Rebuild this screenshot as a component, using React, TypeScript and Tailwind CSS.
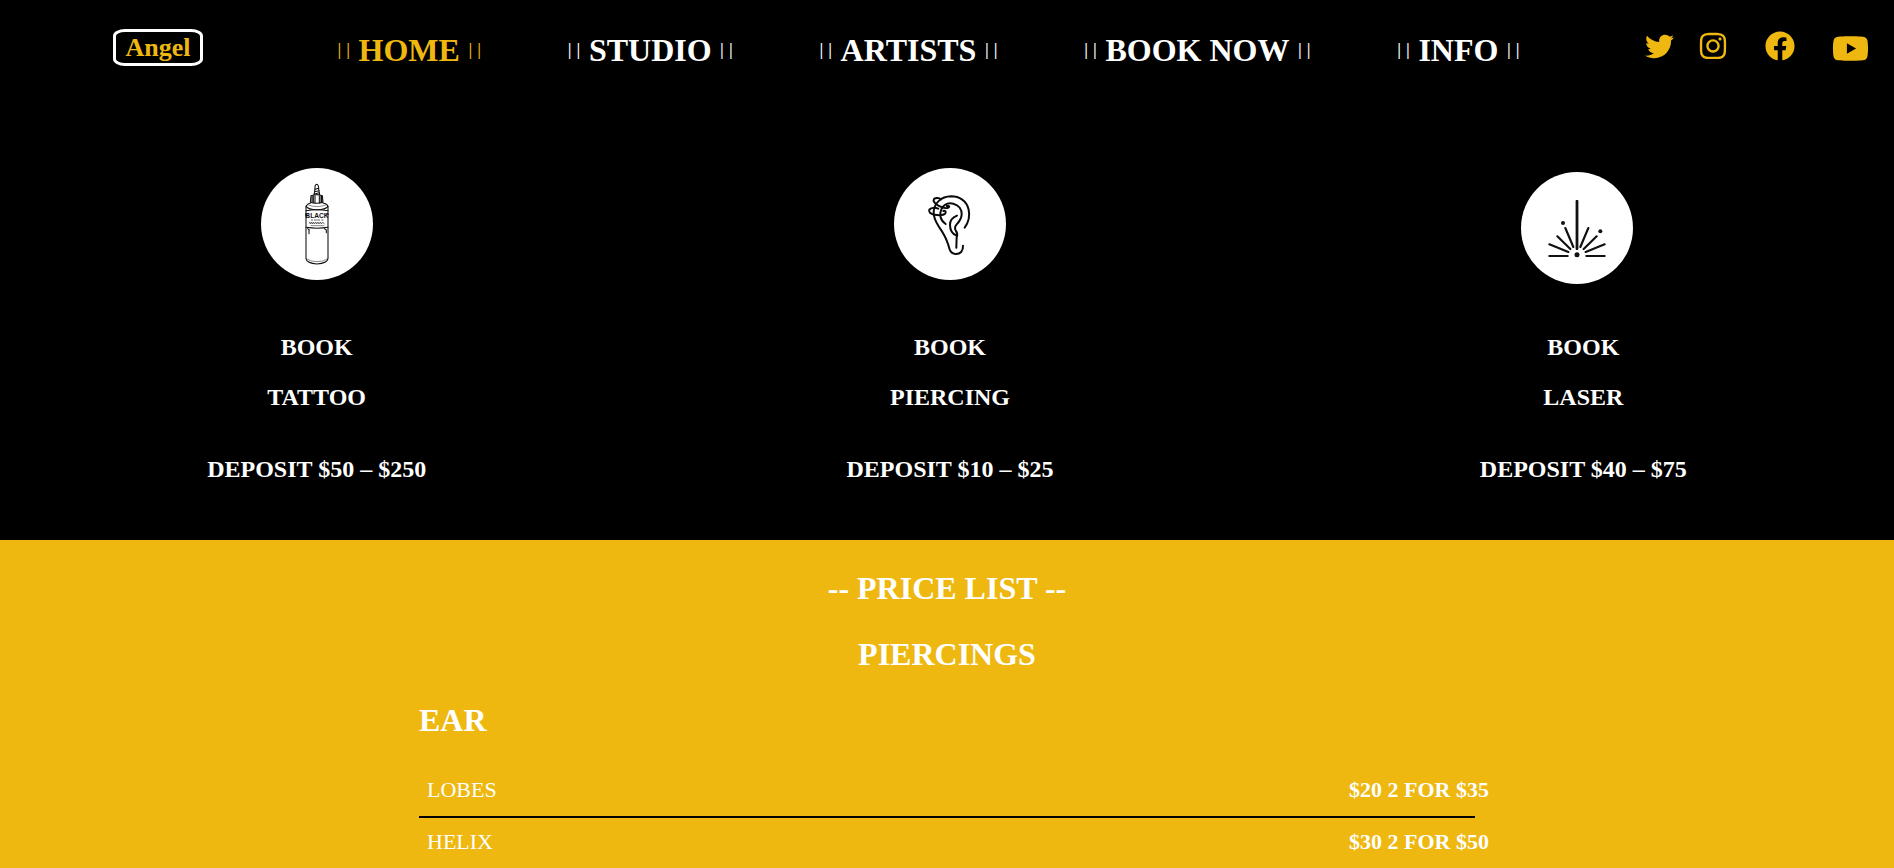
import type { ReactNode } from "react";
import { FaFacebook, FaInstagram, FaTwitter, FaYoutube } from "react-icons/fa";

const links = ["Home", "Studio", "Artists", "Book Now", "Info"];

const prices = [
  { name: "LOBES", price: "$20 2 FOR $35" },
  { name: "HELIX", price: "$30 2 FOR $50" },
];

function InkBottle() {
  return (
    <svg viewBox="63 53 336 336" className="size-28" role="img" aria-label="Ink bottle">
      <circle cx="231" cy="221" r="168" fill="#fff" />
      <g fill="none" stroke="#111" strokeWidth="3.2" strokeLinecap="round" strokeLinejoin="round">
        <path d="M225 116 Q224 103 230 102 Q236 103 236 116 L239 134 H222 Z" />
        <path d="M225 117 L236 114 M224 124 L237 121 M223 131 L238 127" />
        <path d="M213 136 Q230 131 247 136 L249 156 Q230 162 211 156 Z" fill="#fff" />
        <path d="M216 137 V156 M220 136 V157 M225 136 V158 M238 136 V158 M243 136 V157 M246 138 V155" />
        <path d="M212 158 Q202 160 198 168 V325 Q200 339 231 341 Q262 339 264 325 V168 Q261 160 249 158" />
        <path d="M198 168 Q205 178 231 178 Q257 178 264 168" />
        <path d="M205 164 Q231 174 257 164" strokeWidth="1.5" />
        <path d="M198 181 Q231 176 264 181 M198 231 Q231 236 264 231" />
        <path d="M200 326 Q211 334 231 334 Q252 334 262 326" strokeWidth="1.5" />
        <path d="M197 192 L204 190 M197 196 L203 196 M258 190 L265 192" />
        <path d="M203 235 L208 239 M207 240 V250 M253 235 L259 239 M259 240 V247" />
        <path d="M214 209 H218 M223 209 H229 M233 209 H239 M245 209 H249" strokeWidth="2" />
        <path d="M208 215 L211 221 L214 215 L217 221 L220 215 L223 221 L227 215 L230 221 L234 215 L237 221 L241 215 L244 221 L248 215 L253 221" strokeWidth="1.8" />
        <path d="M213 226 H252" strokeWidth="1.5" />
      </g>
      <text
        x="231"
        y="202"
        textAnchor="middle"
        fill="#111"
        className="font-['Liberation_Sans_Narrow','Liberation_Sans',sans-serif] text-[20px]"
      >
        BLACK
      </text>
    </svg>
  );
}

function PiercedEar() {
  return (
    <svg viewBox="72 53 336 336" className="size-28" role="img" aria-label="Pierced ear">
      <circle cx="240" cy="221" r="168" fill="#fff" />
      <g fill="none" stroke="#0b0b0b" strokeWidth="6" strokeLinecap="round" strokeLinejoin="round">
        <path d="M284 232 C296 215 300 196 296 178 C290 151 268 138 243 138 C213 139 193 158 191 184 C190 200 197 214 206 228 C218 245 229 264 235 284 C239 300 242 310 256 311 C271 312 280 302 279 286" />
        <path d="M227 221 C211 211 207 192 214 177 C222 161 237 157 250 160 C266 164 276 177 275 193 C274 206 268 214 260 222 C255 228 254 235 257 240 C262 247 263 254 260 261 L259 292" />
        <path d="M261 196 C249 201 240 211 240 223 C240 237 246 250 259 255" />
        <path d="M213 147 C208 142 197 141 192 146 C188 152 195 160 205 166 C216 172 230 175 236 171 C240 168 236 165 230 167" />
        <path d="M205 175 C194 171 182 172 178 178 C175 185 181 191 193 193 C205 195 221 195 226 189 C229 184 225 180 220 182" />
      </g>
    </svg>
  );
}

function LaserBurst() {
  return (
    <svg viewBox="62 66 336 336" className="size-28" role="img" aria-label="Laser">
      <circle cx="230" cy="234" r="168" fill="#fff" />
      <path
        d="M230 153 V297 M195 234 L219 291 M264 234 L240 291 M171 259 L210 297 M289 259 L250 297 M147 283 L204 306 M313 283 L256 306 M147 318 H202 M258 318 H313"
        fill="none"
        stroke="#111"
        strokeWidth="6.5"
        strokeLinecap="round"
      />
      <g fill="#111">
        <rect x="226" y="150" width="8" height="149" rx="2" />
        <circle cx="230" cy="314" r="7.5" />
        <circle cx="188" cy="219" r="6" />
        <circle cx="300" cy="244" r="6" />
      </g>
    </svg>
  );
}

function Service({ picture, name, deposit, low }: { picture: ReactNode; name: string; deposit: string; low?: boolean }) {
  return (
    <article className="flex flex-col items-center text-2xl font-bold">
      <div className={low ? "flex h-[116px] items-end pr-3" : "flex h-[116px] items-start"}>{picture}</div>
      <h2 className="mt-[38px] text-center leading-[50px]">
        <a href="#book">
          BOOK
          <br />
          {name}
        </a>
      </h2>
      <p className="mt-[23px] leading-[48px]">DEPOSIT {deposit}</p>
    </article>
  );
}

function Bars() {
  return <span className="pb-0.5 font-['Open_Sans',sans-serif] text-base leading-none font-medium">||</span>;
}

export default function App() {
  return (
    <div className="flex min-h-screen flex-col bg-[#eeb811] font-['Liberation_Serif',serif] text-white">
      <div className="overflow-x-clip bg-black pb-[47px]">
        <header className="flex items-start pt-7 pr-[25px] pl-[113px] text-[#eeb811]">
          <a
            href="#top"
            className="mt-px flex h-[37px] w-[90px] shrink-0 items-center justify-center rounded-[12px/7px] border-3 border-white text-[26px] leading-none font-bold"
          >
            Angel
          </a>
          <nav aria-label="Main" className="ml-[132px] grow">
            <ul className="flex justify-between text-[32px] leading-11 whitespace-nowrap">
              {links.map((label, i) => (
                <li key={label}>
                  <a
                    href={"#" + label.toLowerCase()}
                    className={i === 0 ? "flex items-center gap-1.5 text-[#eeb811]" : "flex items-center gap-1.5 text-white"}
                  >
                    <Bars />
                    <span className="font-bold uppercase">{label}</span>
                    <Bars />
                  </a>
                </li>
              ))}
            </ul>
          </nav>
          <div className="ml-[123px] flex h-9 shrink-0 items-center">
            <a href="#twitter" aria-label="Twitter">
              <FaTwitter className="size-[29px]" />
            </a>
            <a href="#instagram" aria-label="Instagram" className="ml-6">
              <FaInstagram className="size-[30px]" />
            </a>
            <a href="#facebook" aria-label="Facebook" className="ml-[37px]">
              <FaFacebook className="size-[30px]" />
            </a>
            <a href="#youtube" aria-label="YouTube" className="mt-1 ml-[37px]">
              <FaYoutube className="size-[37px]" />
            </a>
          </div>
        </header>

        <section className="mt-24 -mr-1.5 grid grid-cols-3">
          <Service picture={<InkBottle />} name="TATTOO" deposit="$50 – $250" />
          <Service picture={<PiercedEar />} name="PIERCING" deposit="$10 – $25" />
          <Service picture={<LaserBurst />} name="LASER" deposit="$40 – $75" low />
        </section>
      </div>

      <main className="pt-[15px]">
        <div className="text-center text-[32px] leading-[66px] font-bold">
          <h1>-- PRICE LIST --</h1>
          <h2>PIERCINGS</h2>
        </div>
        <section className="mx-auto w-full max-w-[1056px]">
          <h3 className="text-[32px] leading-[66px] font-bold">EAR</h3>
          <table className="mt-3 w-full table-fixed border-collapse text-left text-[22px] whitespace-nowrap">
            <tbody>
              {prices.map((row) => (
                <tr key={row.name} className="h-[52px] border-b-2 border-black last:h-[50px] last:border-b-0">
                  <th scope="row" className="p-0 pb-0.5 pl-2 font-normal">
                    {row.name}
                  </th>
                  <td className="w-[126px] p-0 pb-0.5 font-bold">{row.price}</td>
                </tr>
              ))}
            </tbody>
          </table>
        </section>
      </main>
    </div>
  );
}
